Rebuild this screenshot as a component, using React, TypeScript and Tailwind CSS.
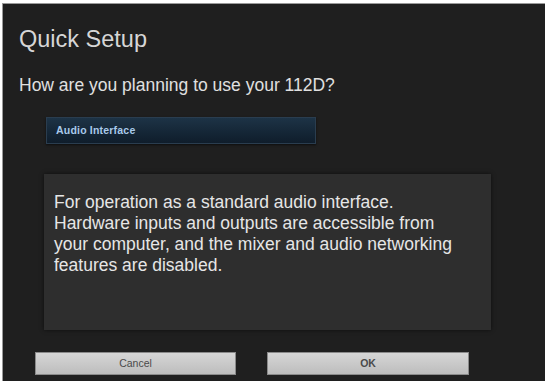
export default function App() {
  return (
    <div className="w-[545px] h-[381px] bg-white pt-[3px] pl-[2px] overflow-hidden">
      <div
        className="h-[378px] bg-[#1f1f1f] border-t border-l border-[#9a9a9a] pl-4 pr-[50px] pt-[21px] text-[#dadada]"
        style={{ fontFamily: '"Liberation Sans", Arial, sans-serif' }}
      >
        <h1 className="text-[23.5px] leading-[29px] text-[#d6d6d6]">Quick Setup</h1>
        <p className="mt-[21px] text-[17.5px] leading-[21px] text-[#e0e0e0]">How are you planning to use your 112D?</p>

        <div className="ml-[27px] mt-[21px] w-[270px] h-[27px] flex items-center pl-[9px] bg-gradient-to-b from-[#1d3346] to-[#0f1d2b] border border-[#2a3d4f] shadow-[0_1px_2px_rgba(0,0,0,0.6)]">
          <span className="text-[10.5px] font-bold tracking-[0.2px] text-[#a9c9ea]">Audio Interface</span>
        </div>

        <div className="ml-[25px] mt-[30px] w-[447px] h-[156px] bg-[#2e2e2e] shadow-[0_0_4px_rgba(0,0,0,0.6)] pl-[10px] pt-[18px]">
          <p className="text-[17.5px] leading-[21px] text-[#e6e6e6]">
            For operation as a standard audio interface.
            <br />
            Hardware inputs and outputs are accessible from
            <br />
            your computer, and the mixer and audio networking
            <br />
            features are disabled.
          </p>
        </div>

        <div className="mt-[22px] ml-[16px] flex gap-[31px]">
          <button className="w-[201px] h-[23px] bg-gradient-to-b from-[#d6d6d6] to-[#bdbdbd] border border-[#8a8a8a] text-[10.5px] text-[#4a4a4a] flex items-center justify-center">
            Cancel
          </button>
          <button className="w-[202px] h-[23px] bg-gradient-to-b from-[#d6d6d6] to-[#bdbdbd] border border-[#8a8a8a] text-[10.5px] font-bold text-[#4a4a4a] flex items-center justify-center">
            OK
          </button>
        </div>
      </div>
    </div>
  );
}
